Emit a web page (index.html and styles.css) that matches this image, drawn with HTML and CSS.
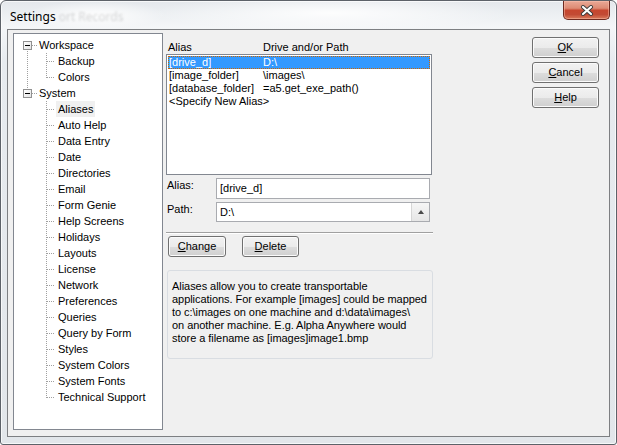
FILE: index.html
```html
<!DOCTYPE html>
<html lang="en">
<head>
<meta charset="utf-8">
<title>Settings</title>
<link rel="stylesheet" href="styles.css">
</head>
<body>
<div class="window">
  <div class="titlebar">
    <span class="title">Settings</span>
    <span class="ghost">ort Records</span>
    <button class="close" aria-label="Close">
      <svg width="14" height="11" viewBox="0 0 14 11">
        <path d="M3 2 L11 9 M11 2 L3 9" stroke="#3b3b3b" stroke-width="4" stroke-linecap="round"/>
        <path d="M3 2 L11 9 M11 2 L3 9" stroke="#ffffff" stroke-width="2.2" stroke-linecap="round"/>
      </svg>
    </button>
  </div>

  <div class="client">
    <ul class="tree">
      <li class="node root open-top"><span class="gutter"><span class="toggle"></span></span><span class="label">Workspace</span></li>
      <li class="node child under-root"><span class="gutter"></span><span class="label">Backup</span></li>
      <li class="node child under-root last"><span class="gutter"></span><span class="label">Colors</span></li>
      <li class="node root open-bottom"><span class="gutter"><span class="toggle"></span></span><span class="label">System</span></li>
      <li class="node child selected"><span class="gutter"></span><span class="label">Aliases</span></li>
      <li class="node child"><span class="gutter"></span><span class="label">Auto Help</span></li>
      <li class="node child"><span class="gutter"></span><span class="label">Data Entry</span></li>
      <li class="node child"><span class="gutter"></span><span class="label">Date</span></li>
      <li class="node child"><span class="gutter"></span><span class="label">Directories</span></li>
      <li class="node child"><span class="gutter"></span><span class="label">Email</span></li>
      <li class="node child"><span class="gutter"></span><span class="label">Form Genie</span></li>
      <li class="node child"><span class="gutter"></span><span class="label">Help Screens</span></li>
      <li class="node child"><span class="gutter"></span><span class="label">Holidays</span></li>
      <li class="node child"><span class="gutter"></span><span class="label">Layouts</span></li>
      <li class="node child"><span class="gutter"></span><span class="label">License</span></li>
      <li class="node child"><span class="gutter"></span><span class="label">Network</span></li>
      <li class="node child"><span class="gutter"></span><span class="label">Preferences</span></li>
      <li class="node child"><span class="gutter"></span><span class="label">Queries</span></li>
      <li class="node child"><span class="gutter"></span><span class="label">Query by Form</span></li>
      <li class="node child"><span class="gutter"></span><span class="label">Styles</span></li>
      <li class="node child"><span class="gutter"></span><span class="label">System Colors</span></li>
      <li class="node child"><span class="gutter"></span><span class="label">System Fonts</span></li>
      <li class="node child last"><span class="gutter"></span><span class="label">Technical Support</span></li>
    </ul>

    <div class="aliases">
      <div class="columns"><span class="col-name">Alias</span><span>Drive and/or Path</span></div>
      <div class="listbox">
        <div class="item selected"><span class="col-name">[drive_d]</span><span>D:\</span></div>
        <div class="item"><span class="col-name">[image_folder]</span><span>\images\</span></div>
        <div class="item"><span class="col-name">[database_folder]</span><span>=a5.get_exe_path()</span></div>
        <div class="item"><span class="col-name">&lt;Specify New Alias&gt;</span></div>
      </div>

      <div class="field">
        <label class="field-label">Alias:</label>
        <div class="textbox">[drive_d]</div>
      </div>
      <div class="field">
        <label class="field-label">Path:</label>
        <div class="textbox combo"><span class="value">D:\</span><span class="spin"><span class="arrow-up"></span></span></div>
      </div>

      <div class="separator"></div>

      <div class="actions">
        <button class="btn btn-change"><u>C</u>hange</button>
        <button class="btn btn-delete"><u>D</u>elete</button>
      </div>

      <div class="note">Aliases allow you to create transportable<br>applications. For example [images] could be mapped<br>to c:\images on one machine and d:\data\images\<br>on another machine. E.g. Alpha Anywhere would<br>store a filename as [images]image1.bmp</div>
    </div>

    <div class="dialog-buttons">
      <button class="btn"><u>O</u>K</button>
      <button class="btn"><u>C</u>ancel</button>
      <button class="btn"><u>H</u>elp</button>
    </div>
  </div>
</div>
</body>
</html>
```

FILE: styles.css
```css
* { box-sizing: border-box; }

html, body {
  margin: 0;
  padding: 0;
}

body {
  width: 617px;
  height: 445px;
  overflow: hidden;
  background: #ffffff;
  font-family: "Liberation Sans", Arial, sans-serif;
  font-size: 11px;
  color: #000;
}

/* Glass window frame */
.window {
  width: 617px;
  height: 445px;
  display: flex;
  flex-direction: column;
  border: 1px solid #5d6269;
  border-radius: 6px 6px 3px 3px;
  padding: 0 6px 7px 6px;
  background:
    radial-gradient(ellipse 70px 14px at 95px 14px, rgba(255,255,255,0.95), rgba(255,255,255,0)),
    radial-gradient(ellipse 180px 18px at 330px 12px, rgba(255,255,255,0.9), rgba(255,255,255,0)),
    linear-gradient(to bottom, #e4e8ec 0, #f4f6f8 26px, #e7ebef 60px, #e2e6ea 100%);
  box-shadow: inset 0 0 0 1px rgba(255,255,255,0.7);
}

.titlebar {
  height: 28px;
  display: flex;
  align-items: flex-start;
  flex: none;
}

.title {
  font-family: "Noto Sans", "Open Sans", sans-serif;
  font-size: 12px;
  line-height: 16px;
  margin-top: 8px;
  padding-left: 3px;
  color: #000;
}

.ghost {
  font-family: "Noto Sans", "Open Sans", sans-serif;
  font-size: 12px;
  line-height: 16px;
  margin-top: 8px;
  margin-left: 3px;
  color: rgba(60, 60, 60, 0.2);
  filter: blur(1.2px);
}

.close {
  margin-left: auto;
  width: 47px;
  height: 19px;
  padding: 0;
  border: 1px solid #6e2a20;
  border-top: none;
  border-radius: 0 0 5px 5px;
  display: flex;
  align-items: center;
  justify-content: center;
  background: linear-gradient(to bottom, #e9a997 0%, #dd8b74 40%, #c6462f 52%, #c24a34 75%, #d97a5c 100%);
  box-shadow: inset 0 0 0 1px rgba(255, 200, 180, 0.45);
}

.close svg { display: block; }

/* Client area of the dialog */
.client {
  flex: 1;
  display: flex;
  align-items: stretch;
  border: 1px solid #7d7f82;
  background: #f0f0f0;
  padding: 3px 0 6px 5px;
}

/* Tree view */
.tree {
  list-style: none;
  margin: 0;
  width: 150px;
  flex: none;
  padding: 3px 0 0 0;
  background: #fff;
  border: 1px solid #828790;
}

.node {
  height: 16px;
  display: flex;
  align-items: center;
  white-space: nowrap;
}

.gutter {
  flex: none;
  height: 16px;
  display: flex;
  align-items: flex-start;
}

.label {
  line-height: 16px;
  padding: 0 2px;
}

.node.selected .label { background: #f0f0f0; }

/* dotted connector pieces */
.root .gutter {
  width: 23px;
  background:
    repeating-linear-gradient(to right, #a0a0a0 0 1px, transparent 1px 2px) 18px 8px / 5px 1px no-repeat;
}

.root.open-top .gutter {
  background:
    repeating-linear-gradient(to right, #a0a0a0 0 1px, transparent 1px 2px) 18px 8px / 5px 1px no-repeat,
    repeating-linear-gradient(to bottom, #a0a0a0 0 1px, transparent 1px 2px) 13px 14px / 1px 2px no-repeat;
}

.root.open-bottom .gutter {
  background:
    repeating-linear-gradient(to right, #a0a0a0 0 1px, transparent 1px 2px) 18px 8px / 5px 1px no-repeat,
    repeating-linear-gradient(to bottom, #a0a0a0 0 1px, transparent 1px 2px) 13px 0 / 1px 4px no-repeat;
}

.toggle {
  width: 9px;
  height: 9px;
  margin: 4px 0 0 9px;
  border: 1px solid #919191;
  background:
    linear-gradient(#000, #000) center / 5px 1px no-repeat,
    linear-gradient(to bottom right, #ffffff, #e4e4e4);
}

.child .gutter {
  width: 42px;
  background:
    repeating-linear-gradient(to right, #a0a0a0 0 1px, transparent 1px 2px) 33px 8px / 7px 1px no-repeat,
    repeating-linear-gradient(to bottom, #a0a0a0 0 1px, transparent 1px 2px) 32px 0 / 1px 16px no-repeat;
}

.child.last .gutter {
  background:
    repeating-linear-gradient(to right, #a0a0a0 0 1px, transparent 1px 2px) 33px 8px / 7px 1px no-repeat,
    repeating-linear-gradient(to bottom, #a0a0a0 0 1px, transparent 1px 2px) 32px 0 / 1px 9px no-repeat;
}

.child.under-root .gutter {
  background:
    repeating-linear-gradient(to right, #a0a0a0 0 1px, transparent 1px 2px) 33px 8px / 7px 1px no-repeat,
    repeating-linear-gradient(to bottom, #a0a0a0 0 1px, transparent 1px 2px) 32px 0 / 1px 16px no-repeat,
    repeating-linear-gradient(to bottom, #a0a0a0 0 1px, transparent 1px 2px) 13px 0 / 1px 16px no-repeat;
}

.child.under-root.last .gutter {
  background:
    repeating-linear-gradient(to right, #a0a0a0 0 1px, transparent 1px 2px) 33px 8px / 7px 1px no-repeat,
    repeating-linear-gradient(to bottom, #a0a0a0 0 1px, transparent 1px 2px) 32px 0 / 1px 9px no-repeat,
    repeating-linear-gradient(to bottom, #a0a0a0 0 1px, transparent 1px 2px) 13px 0 / 1px 16px no-repeat;
}

/* Alias editor panel */
.aliases {
  width: 267px;
  flex: none;
  margin-left: 3px;
  display: flex;
  flex-direction: column;
}

.columns {
  height: 21px;
  padding: 8px 0 0 2px;
  line-height: 13px;
  display: flex;
}

.col-name {
  width: 95px;
  flex: none;
}

.listbox {
  width: 266px;
  height: 121px;
  border: 1px solid #828790;
  background: #fff;
  padding: 1px;
}

.item {
  height: 13px;
  line-height: 13px;
  padding-left: 1px;
  display: flex;
  white-space: nowrap;
}

.item .col-name { width: 94px; }

.item.selected {
  background: #3399ff;
  color: #fff;
  outline: 1px dotted #cc6600;
  outline-offset: -1px;
}

.field {
  display: flex;
  align-items: flex-start;
  margin-top: 3px;
}

.field-label {
  width: 50px;
  flex: none;
  padding: 1px 0 0 1px;
  line-height: 13px;
}

.textbox {
  width: 214px;
  height: 21px;
  border: 1px solid #a9abb0;
  background: #fff;
  padding-left: 3px;
  line-height: 19px;
}

.textbox.combo {
  height: 20px;
  display: flex;
  padding-right: 0;
  line-height: 18px;
}

.combo .value { flex: 1; }

.spin {
  width: 18px;
  flex: none;
  border-left: 1px solid #d6d6d6;
  background: linear-gradient(to bottom, #f6f6f6, #e6e6e6);
  display: flex;
  align-items: center;
  justify-content: center;
}

.arrow-up {
  width: 0;
  height: 0;
  border-left: 3.5px solid transparent;
  border-right: 3.5px solid transparent;
  border-bottom: 4px solid #4a4a4a;
}

.separator {
  margin-top: 10px;
  height: 2px;
  border-top: 1px solid #a0a0a0;
  border-bottom: 1px solid #ffffff;
}

.actions {
  display: flex;
  margin-top: 2px;
  padding-left: 2px;
  gap: 16px;
}

.btn {
  height: 21px;
  padding: 0;
  font-family: "Liberation Sans", Arial, sans-serif;
  font-size: 11px;
  color: #000;
  border: 1px solid #707070;
  border-radius: 3px;
  background: linear-gradient(to bottom, #f2f2f2 0%, #ebebeb 50%, #dddddd 51%, #cfcfcf 100%);
  box-shadow: inset 0 0 0 1px #fbfbfb;
  line-height: 19px;
}

.btn-change { width: 58px; }
.btn-delete { width: 57px; }

.note {
  margin: 13px 0 0 1px;
  width: 266px;
  height: 89px;
  border: 1px solid #d9dde2;
  border-radius: 3px;
  padding: 9px 0 0 4px;
  line-height: 13px;
  white-space: nowrap;
  letter-spacing: -0.05px;
}

/* OK / Cancel / Help column */
.dialog-buttons {
  margin-left: 99px;
  margin-top: 4px;
  width: 67px;
  flex: none;
  display: flex;
  flex-direction: column;
  gap: 4px;
}

.dialog-buttons .btn { width: 67px; }
```
